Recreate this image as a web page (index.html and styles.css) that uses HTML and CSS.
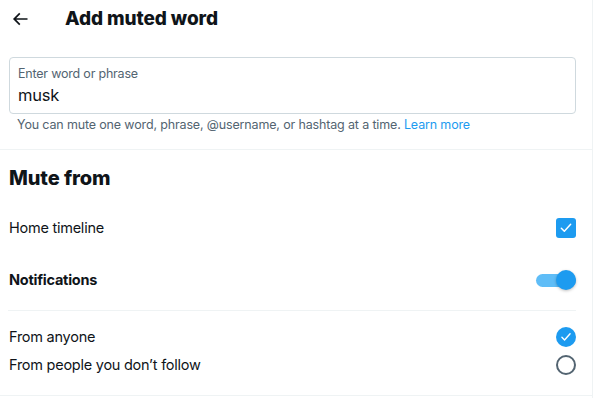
FILE: index.html
```html
<!DOCTYPE html>
<html>
<head>
<meta charset="utf-8">
<link rel="stylesheet" href="styles.css">
</head>
<body>
<div class="panel">
  <header class="header">
    <span class="back">
      <svg viewBox="0 0 24 24" width="20" height="20"><path d="M7.414 13l5.043 5.04-1.414 1.42L3.586 12l7.457-7.46 1.414 1.42L7.414 11H21v2H7.414z" fill="#0f1419"/></svg>
    </span>
    <h1 class="title">Add muted word</h1>
  </header>
  <section class="field-section">
    <div class="field">
      <div class="field-label">Enter word or phrase</div>
      <div class="field-value">musk</div>
    </div>
    <p class="helper">You can mute one word, phrase, @username, or hashtag at a time. <span class="link">Learn more</span></p>
  </section>
  <section class="mute-section">
    <h2 class="heading">Mute from</h2>
    <div class="row">
      <span class="row-label">Home timeline</span>
      <span class="checkbox">
        <svg viewBox="0 0 24 24" width="16" height="16"><path d="M5 12.5l4.5 4.5L19 6.5" fill="none" stroke="#fff" stroke-width="2.2" stroke-linecap="round" stroke-linejoin="round"/></svg>
      </span>
    </div>
    <div class="row">
      <span class="row-label bold">Notifications</span>
      <span class="toggle"><span class="track"></span><span class="thumb"></span></span>
    </div>
    <div class="divider"></div>
    <div class="sub-rows">
      <div class="sub-row">
        <span class="row-label">From anyone</span>
        <span class="radio checked">
          <svg viewBox="0 0 24 24" width="14" height="14"><path d="M5 12.5l4.5 4.5L19 6.5" fill="none" stroke="#fff" stroke-width="2.4" stroke-linecap="round" stroke-linejoin="round"/></svg>
        </span>
      </div>
      <div class="sub-row">
        <span class="row-label">From people you don’t follow</span>
        <span class="radio"></span>
      </div>
    </div>
  </section>
</div>
</body>
</html>
```

FILE: styles.css
```css
* { box-sizing: border-box; }
html, body { margin: 0; padding: 0; background: #fff; }
body {
  font-family: "Inter", "Liberation Sans", sans-serif;
  color: #0f1419;
  width: 600px;
  height: 398px;
  overflow: hidden;
}
.panel {
  width: 593px;
  border-right: 1px solid #eff3f4;
  height: 398px;
}
.header {
  height: 38px;
  display: flex;
  align-items: center;
}
.back {
  width: 20px;
  height: 20px;
  margin-left: 10px;
  display: flex;
}
.title {
  margin: 0 0 0 35px;
  font-size: 19px;
  font-weight: 800;
  line-height: 24px;
  letter-spacing: -0.1px;
}
.field-section {
  padding: 19px 16px 16px 9px;
  border-bottom: 1px solid #eff3f4;
}
.field {
  height: 57px;
  border: 1px solid #cfd9de;
  border-radius: 4px;
  padding: 8px 8px 0 8px;
}
.field-label {
  font-size: 12.5px;
  line-height: 16px;
  letter-spacing: -0.2px;
  color: #536471;
}
.field-value {
  font-size: 16.5px;
  line-height: 22px;
  letter-spacing: -0.2px;
  margin-top: 2px;
}
.helper {
  margin: 3px 0 0 8px;
  font-size: 12.5px;
  line-height: 16px;
  letter-spacing: -0.15px;
  color: #536471;
}
.link { color: #1d9bf0; }
.mute-section {
  padding: 14px 16px 16px 9px;
  border-bottom: 1px solid #eff3f4;
}
.heading {
  margin: 0 0 10px 0;
  font-size: 20px;
  font-weight: 800;
  line-height: 28px;
  letter-spacing: -0.1px;
}
.row {
  height: 52px;
  display: flex;
  align-items: center;
  justify-content: space-between;
}
.row-label { font-size: 14.5px; line-height: 20px; letter-spacing: -0.25px; }
.bold { font-weight: 700; }
.checkbox {
  width: 20px;
  height: 20px;
  border-radius: 3px;
  background: #1d9bf0;
  display: flex;
  align-items: center;
  justify-content: center;
}
.toggle {
  position: relative;
  width: 40px;
  height: 20px;
  display: block;
}
.track {
  position: absolute;
  left: 0;
  top: 4px;
  width: 40px;
  height: 13px;
  border-radius: 7px;
  background: #5fbdf7;
}
.thumb {
  position: absolute;
  right: 0;
  top: 0;
  width: 20px;
  height: 20px;
  border-radius: 50%;
  background: #1d9bf0;
  box-shadow: 0 1px 3px rgba(0,0,0,0.25);
}
.divider {
  height: 1px;
  background: #eff3f4;
  margin-top: 4px;
  margin-left: -1px;
}
.sub-rows { padding-top: 12px; }
.sub-row {
  height: 28px;
  display: flex;
  align-items: center;
  justify-content: space-between;
}
.radio {
  width: 20px;
  height: 20px;
  border-radius: 50%;
  border: 2px solid #536471;
  display: flex;
  align-items: center;
  justify-content: center;
}
.radio.checked {
  border: none;
  background: #1d9bf0;
}
```
